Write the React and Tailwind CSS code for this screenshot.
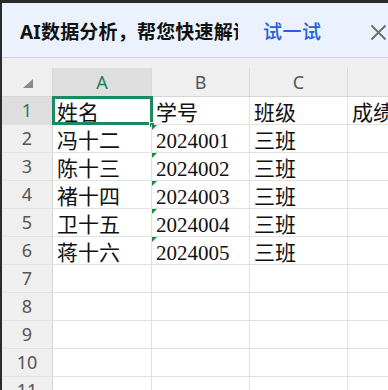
import React from "react";

const COLS = ["A", "B", "C", ""];
const ROWS = [
  ["姓名", "学号", "班级", "成绩"],
  ["冯十二", "2024001", "三班", ""],
  ["陈十三", "2024002", "三班", ""],
  ["褚十四", "2024003", "三班", ""],
  ["卫十五", "2024004", "三班", ""],
  ["蒋十六", "2024005", "三班", ""],
  ["", "", "", ""],
  ["", "", "", ""],
  ["", "", "", ""],
  ["", "", "", ""],
  ["", "", "", ""],
];

const WIDTHS = ["w-[99px]", "w-[98px]", "w-[98px]", "w-[98px]"];

function CornerMark() {
  return (
    <svg width="10" height="9" viewBox="0 0 10 9" className="absolute left-[21px] top-[11px]">
      <polygon points="10,0 10,9 0,9" fill="#8a8a8a" />
    </svg>
  );
}

function Cell({ value, col, row }) {
  const isNumText = col === 1 && row > 0 && value;
  return (
    <div className={`${WIDTHS[col]} shrink-0 h-full relative border-r border-[#e1e1e1] flex items-end overflow-hidden pl-[4px]`}>
      {isNumText && (
        <svg width="5" height="5" viewBox="0 0 5 5" className="absolute left-0 top-0">
          <polygon points="0,0 5,0 0,5" fill="#1e8a3c" />
        </svg>
      )}
      <span className="text-[21px] leading-none whitespace-nowrap text-[#111]">{value}</span>
    </div>
  );
}

export default function App() {
  return (
    <div
      className="w-[388px] h-[390px] overflow-hidden bg-[#2b2b2b] pt-[3px] pl-[2px] flex flex-col"
      style={{ fontFamily: '"Liberation Serif", "Noto Sans CJK SC", serif' }}
    >
      {/* Banner */}
      <div
        className="h-[55px] shrink-0 bg-[#ebf2fe] border-b border-[#cdd5e2] flex items-center pl-[18px] pt-[4px]"
        style={{ fontFamily: '"Noto Sans", "Noto Sans CJK SC", sans-serif' }}
      >
        <div className="w-[218px] overflow-hidden whitespace-nowrap text-[19px] font-bold text-[#111] tracking-[0.2px]">
          AI数据分析，帮您快速解读
        </div>
        <div className="ml-[25px] text-[19px] font-medium text-[#2461d8] tracking-[0.5px]">试一试</div>
        <div className="ml-auto mr-[1px]">
          <svg width="17" height="17" viewBox="0 0 17 17">
            <path d="M1.5 1.5 L15.5 15.5 M15.5 1.5 L1.5 15.5" stroke="#6b6b6b" strokeWidth="1.8" />
          </svg>
        </div>
      </div>

      {/* Sheet */}
      <div className="flex-1 bg-white flex flex-col overflow-hidden">
        <div className="h-[10px] shrink-0 bg-[#efefef]" />
        {/* Column headers */}
        <div
          className="h-[29px] shrink-0 flex bg-[#efefef] border-b border-[#d6d6d6]"
          style={{ fontFamily: '"Noto Sans", sans-serif' }}
        >
          <div className="w-[51px] shrink-0 relative border-r border-[#d6d6d6]">
            <CornerMark />
          </div>
          {COLS.map((c, i) => (
            <div
              key={i}
              className={`${WIDTHS[i]} shrink-0 flex items-center justify-center border-r border-[#dadada] text-[18px] ${
                i === 0 ? "bg-[#dedede] text-[#1b7f5a]" : "text-[#555]"
              }`}
            >
              {c}
            </div>
          ))}
        </div>
        {/* Rows */}
        {ROWS.map((r, ri) => (
          <div key={ri} className="h-[28px] shrink-0 flex border-b border-[#e1e1e1]">
            <div
              className={`w-[51px] shrink-0 flex items-center justify-center border-r border-[#d6d6d6] text-[18px] ${
                ri === 0 ? "bg-[#dedede] text-[#1b7f5a]" : "bg-[#efefef] text-[#555]"
              }`}
              style={{ fontFamily: '"Noto Sans", sans-serif' }}
            >
              {ri + 1}
            </div>
            {r.map((v, ci) =>
              ri === 0 && ci === 0 ? (
                <div key={ci} className="w-[99px] shrink-0 h-full relative flex items-end pl-[4px]">
                  <span className="text-[21px] leading-none text-[#111]">{v}</span>
                  <div className="absolute left-[-1px] top-[-1px] w-[101px] h-[29px] border-[3px] border-[#1b8a63]" />
                  <div className="absolute right-[-3px] bottom-[-4px] w-[6px] h-[6px] bg-[#1b8a63] border border-white" />
                </div>
              ) : (
                <Cell key={ci} value={v} col={ci} row={ri} />
              )
            )}
          </div>
        ))}
      </div>
    </div>
  );
}
